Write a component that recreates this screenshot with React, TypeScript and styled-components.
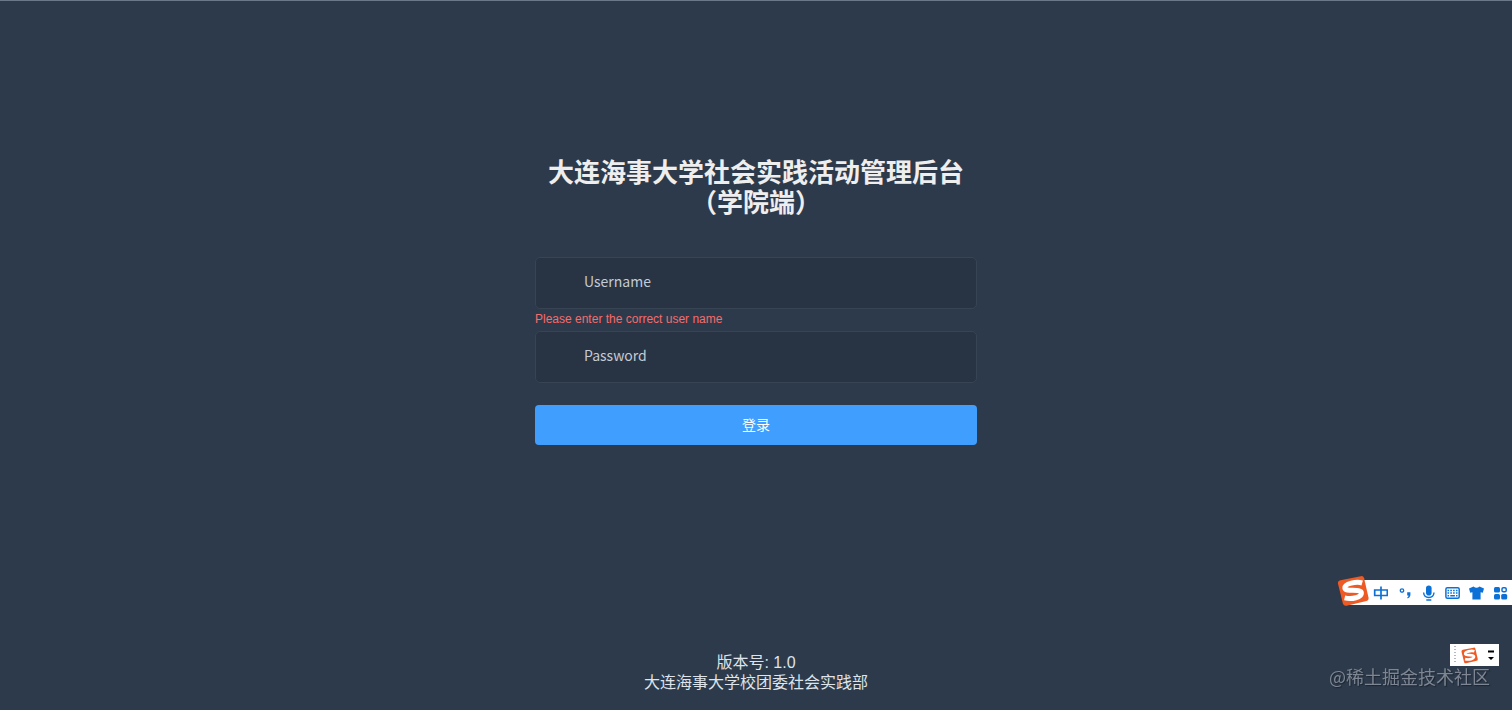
import React from 'react';
import styled, { createGlobalStyle } from 'styled-components';

const GlobalStyle = createGlobalStyle`
  *, *::before, *::after { box-sizing: border-box; }
  body {
    margin: 0;
    background: #2d3a4b;
    font-family: "Liberation Sans", "Noto Sans CJK SC", sans-serif;
  }
`;

const Page = styled.main`
  min-height: 100vh;
  display: flex;
  flex-direction: column;
  align-items: center;
  padding: 157px 24px 17px;
  border-top: 1px solid #6a7889;
  color: #eee;
`;

const LoginForm = styled.form`
  width: 100%;
  max-width: 442px;
  display: flex;
  flex-direction: column;
`;

const Title = styled.h1`
  margin: 0 0 39px;
  font-size: 26px;
  line-height: 30px;
  font-weight: 700;
  text-align: center;
`;

const Field = styled.div`
  height: 74px;
`;

const TextInput = styled.input`
  display: block;
  width: 100%;
  height: 52px;
  padding: 0 16px 4px 48px;
  border: 1px solid #374454;
  border-radius: 5px;
  background: #283443;
  color: #fff;
  font-family: "Noto Sans CJK SC", sans-serif;
  font-size: 14px;
  outline: none;
  &::placeholder { color: #c3cbd6; opacity: 1; }
`;

const FieldError = styled.p`
  margin: 0;
  padding-top: 3px;
  color: #f56c6c;
  font-size: 12px;
  line-height: 14px;
`;

const SubmitButton = styled.button`
  height: 40px;
  padding: 0 0 2px;
  border: 0;
  border-radius: 4px;
  background: #409eff;
  color: #fff;
  font-family: "Noto Sans CJK SC", sans-serif;
  font-size: 14px;
  cursor: pointer;
`;

const Footer = styled.footer`
  margin-top: auto;
  font-size: 16px;
  line-height: 20px;
  text-align: center;
  color: #dfe4ea;
`;

const FooterLine = styled.p`
  margin: 0;
`;

const InputMethodBar = styled.aside`
  position: fixed;
  right: 0;
  bottom: 105px;
  display: flex;
  align-items: center;
  gap: 8px;
  height: 25px;
  padding: 0 4px 0 24px;
  background: #fff;
  color: #0c71d6;
`;

const BarLogo = styled.span`
  position: absolute;
  left: -11px;
  top: -5px;
  display: flex;
`;

const BarItem = styled.span`
  display: flex;
  width: 16px;
  height: 16px;
`;

const LanguageTray = styled.aside`
  position: fixed;
  right: 13px;
  bottom: 44px;
  display: flex;
  align-items: center;
  width: 49px;
  height: 22px;
  padding: 0 4px;
  background: #fff;
`;

const TrayGrip = styled.svg`
  margin-right: 5px;
`;

const TrayMenu = styled.svg`
  margin-left: auto;
`;

const Watermark = styled.span`
  position: fixed;
  right: 22px;
  bottom: 22px;
  color: #7d8692;
  font-family: "Noto Sans CJK SC", sans-serif;
  font-size: 18px;
  line-height: 24px;
  text-shadow: 1px 1px 1px #1c2531;
`;

function SogouLogo({ size }: { size: number }) {
  return (
    <svg width={size} height={size} viewBox="0 0 32 32" aria-hidden="true">
      <path d="M3.500 5.200 23.800 1.200q2.600-.5 3.300 2L31.500 22.400q.5 2.700-2 3.500L9.500 30.700q-2.800.5-3.600-2.200L1 8.800Q.4 6 3.500 5.200Z" fill="#ee5a24" />
      <path d="M25.200 8C19.500 6.300 7.600 8.500 7.900 13 8.200 17.400 24 13.200 24.400 18 24.600 22.500 15 24.600 7.600 22.900" fill="none" stroke="#fff" strokeWidth="5" />
    </svg>
  );
}

const Glyph = ({ children }: { children: React.ReactNode }) => (
  <BarItem>
    <svg width="16" height="16" viewBox="0 0 16 16" fill="none" stroke="currentColor" strokeWidth="2" aria-hidden="true">
      {children}
    </svg>
  </BarItem>
);

export default function App() {
  return (
    <>
      <GlobalStyle />
      <Page>
        <LoginForm noValidate onSubmit={(e) => e.preventDefault()}>
          <Title>
            大连海事大学社会实践活动管理后台
            <br />
            （学院端）
          </Title>
          <Field>
            <TextInput
              type="text"
              name="username"
              placeholder="Username"
              aria-label="Username"
              aria-invalid="true"
              aria-describedby="username-error"
            />
            <FieldError id="username-error">Please enter the correct user name</FieldError>
          </Field>
          <Field>
            <TextInput type="password" name="password" placeholder="Password" aria-label="Password" />
          </Field>
          <SubmitButton type="submit">登录</SubmitButton>
        </LoginForm>
        <Footer>
          <FooterLine>版本号: 1.0</FooterLine>
          <FooterLine>大连海事大学校团委社会实践部</FooterLine>
        </Footer>
      </Page>

      <InputMethodBar aria-label="输入法">
        <BarLogo>
          <SogouLogo size={32} />
        </BarLogo>
        <Glyph>
          <path d="M2.700 5h12.600v5.500h-12.600zM9 1.500v13" strokeWidth="1.700" />
        </Glyph>
        <Glyph>
          <circle cx="6" cy="5.500" r="1.700" strokeWidth="1.300" />
          <path d="M11.200 7.200h3.200v3q-.3 2.400-2.700 3.200l-.5-.9q1.300-.7 1.300-2h-1.300z" fill="currentColor" stroke="none" />
        </Glyph>
        <Glyph>
          <rect x="6" y=".5" width="5.600" height="10" rx="2.800" fill="currentColor" stroke="none" />
          <path d="M3.600 7.500q.4 5 5.200 5t5.200-5M6.300 15h5" strokeWidth="1.400" />
        </Glyph>
        <Glyph>
          <rect x="1.900" y="2.700" width="13.300" height="10.600" rx="1.500" strokeWidth="1.500" />
          <path d="M3.500 5.500h10M3.500 8h10" strokeWidth="1.500" strokeDasharray="1.600 1.200" />
          <path d="M3.500 10.800h1.600M6.300 10.800h4.600M12 10.800h1.500" strokeWidth="1.500" />
        </Glyph>
        <Glyph>
          <path d="M5.500 1.500q3 2.400 6 0l4.500 2-1.200 4.200-2.200-.4V14.500H4.400V7.300l-2.200.4L1 3.500z" fill="currentColor" stroke="none" />
        </Glyph>
        <Glyph>
          <g fill="currentColor" stroke="none">
            <rect x="2" y="2" width="6" height="5.500" rx="1.500" />
            <rect x="2" y="9" width="6" height="5.500" rx="1.500" />
            <rect x="9.200" y="9" width="6" height="5.500" rx="1.500" />
          </g>
          <rect x="10" y="2.700" width="4.200" height="4" rx="1.300" strokeWidth="1.500" />
        </Glyph>
      </InputMethodBar>

      <Watermark>@稀土掘金技术社区</Watermark>
      <LanguageTray aria-label="语言栏">
        <TrayGrip width="2" height="20" viewBox="0 0 2 20" aria-hidden="true">
          <path d="M1 1v18" stroke="#b4b8c0" strokeWidth="2" strokeDasharray="1 2" />
        </TrayGrip>
        <SogouLogo size={17} />
        <TrayMenu width="8" height="12" viewBox="0 0 8 12" aria-hidden="true">
          <path d="M1 1.500h6v2H1zM1 8h6L4 11z" fill="#000" />
        </TrayMenu>
      </LanguageTray>
    </>
  );
}
